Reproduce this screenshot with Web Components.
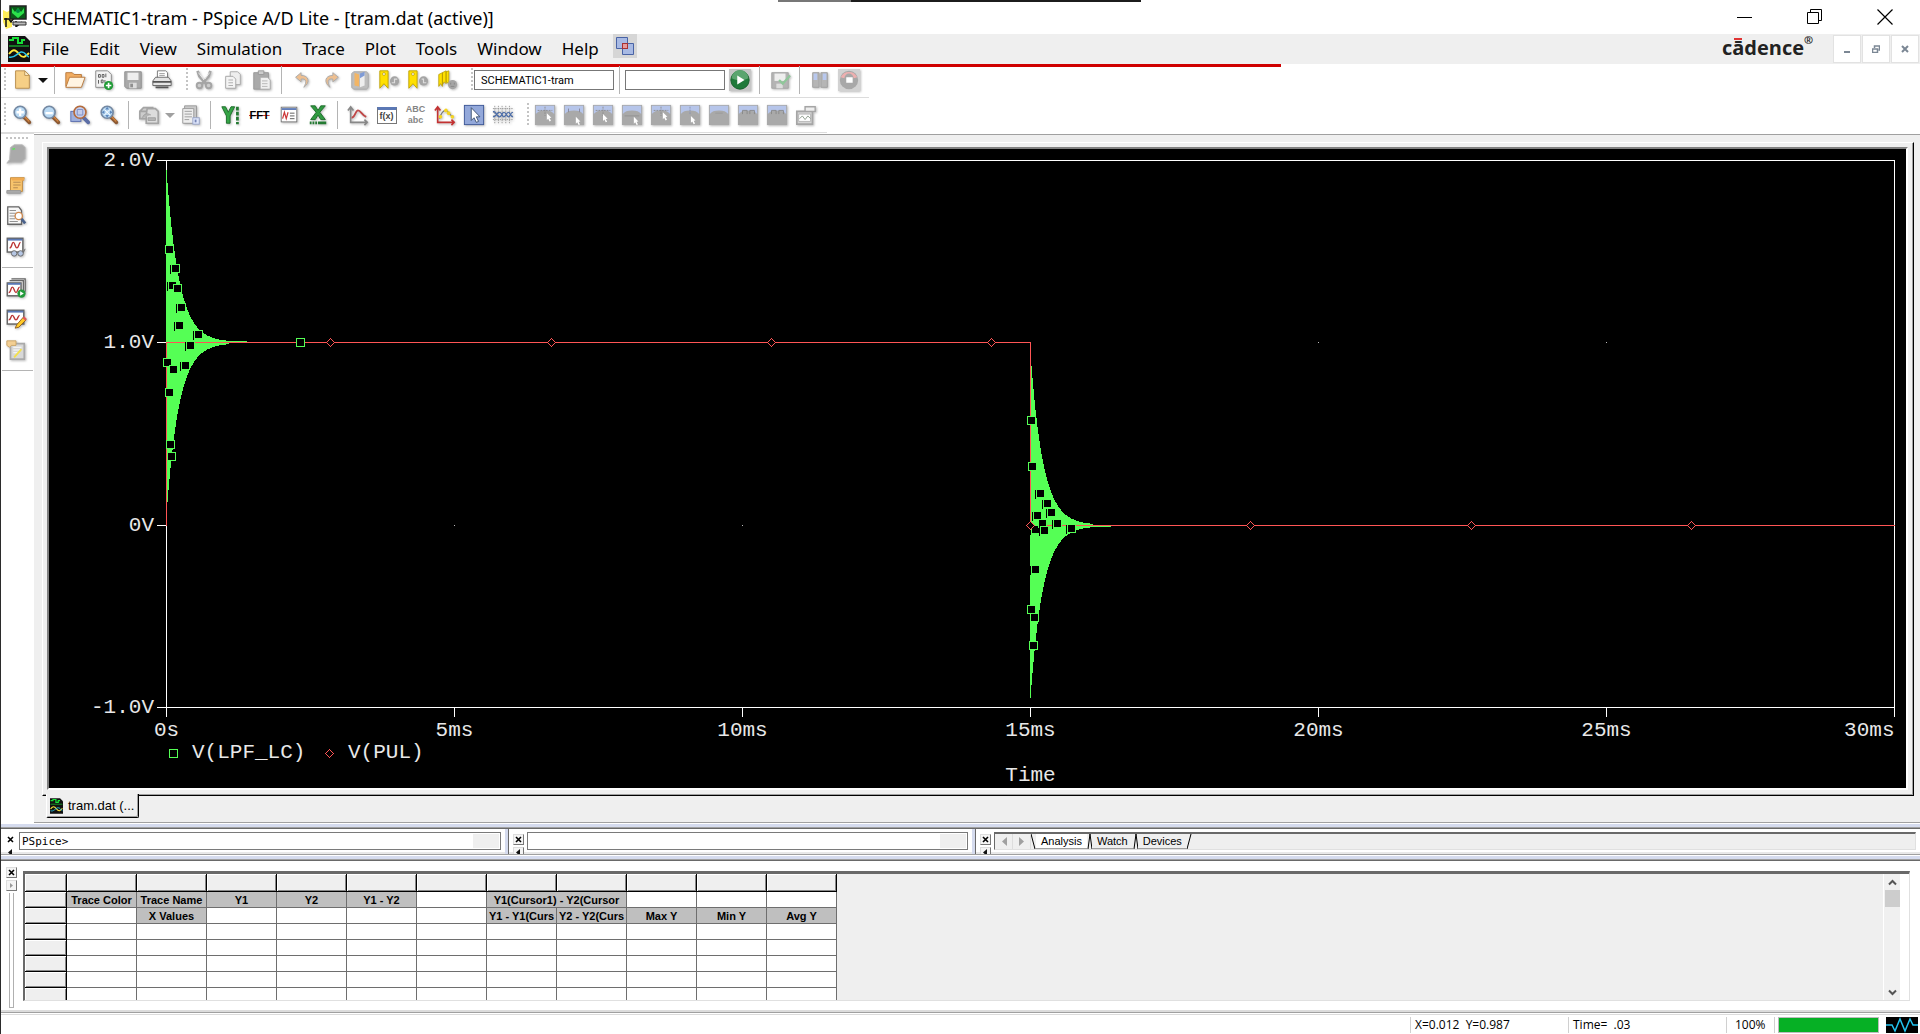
<!DOCTYPE html>
<html lang="en">
<head>
<meta charset="utf-8">
<title>SCHEMATIC1-tram - PSpice A/D Lite</title>
<style>
html, body { height: 100%; margin: 0; }
body { font-family: "Noto Sans", "Liberation Sans", sans-serif; background: #fff; color: #000; overflow: hidden; }
</style>
</head>
<body>
<pspice-app></pspice-app>
<script>
const BASE = `<style>
:host { box-sizing: border-box; }
*, *::before, *::after { box-sizing: border-box; }
button { font: inherit; color: inherit; background: none; border: 0; padding: 0; margin: 0; }
input { font: inherit; border-radius: 0; outline: 0; margin: 0; }
svg { display: block; }
</style>`;
class Part extends HTMLElement {
  connectedCallback() {
    if (this.shadowRoot) return;
    this.attachShadow({ mode: 'open' }).innerHTML = BASE + this.render();
    this.ready();
  }
  render() { return ''; }
  ready() {}
}

/* ---------- icons ---------- */
const win = '<rect x="3.5" y="3.5" width="17" height="16" fill="#fff" stroke="#777"/><path d="M4 5.5h16" stroke="#5b78b5" stroke-width="2"/>';
const lens = (inner) => `<path d="M14 14l6 6" stroke="#8d5a34" stroke-width="4" stroke-linecap="round"/><path d="M15 14l5 5" stroke="#d2843e" stroke-width="1.5"/><circle cx="10" cy="9" r="6.5" fill="#b9d9f3" stroke="#7489a3" stroke-width="1.8"/>${inner}`;
const marker = (t) => `<path d="M2 2h9v19l-4.500-5L2 21z" fill="#ffe000" stroke="#c2a400"/><circle cx="6.5" cy="5.5" r="1.5" fill="#fff" stroke="#a88c00" stroke-width=".7"/><circle cx="18" cy="13" r="5" fill="#a5a5a5"/><path d="${t}" fill="none" stroke="#ddd" stroke-width="1.3"/>`;
const cur = (extra) => `<rect x="1" y="1" width="22" height="22" fill="#a9a9a9"/><path d="M2 2h20v9c-2-3-5-4-10-4s-8 1-10 4z" fill="#b6c5ea"/>${extra}`;
const ptr = (x, y) => `<path d="M${x} ${y}l5 5-2 .3 1.5 3-1.5.7-1.5-3-1.5 1.500z" fill="#fff"/>`;
const cross = '<path d="M4 7h16M12 3v10" stroke="#8d8d8d" stroke-dasharray="2 1"/>';
const ICONS = {
  fresh: '<path d="M5 2h10l5 5v14H5z" fill="#f6cf86" stroke="#b98d4c"/><path d="M15 2v5h5z" fill="#fff1cf" stroke="#b98d4c"/>',
  open: '<path d="M2 19V4h7l2 2h8v4" fill="#f1ad62" stroke="#b9783a"/><path d="M2 20l4-11h17l-4 11z" fill="#fff4e2" stroke="#b9783a"/>',
  addfile: '<path d="M3 2h13l4 4v14H3z" fill="#f2f2f2" stroke="#888"/><path d="M6 6h2v3H6zM10 6h2v3h-2zM14 5v4M6 12v4M9 12h2v3H9zM13 12v3" fill="none" stroke="#555"/><circle cx="17" cy="18" r="5" fill="#1f9a35"/><path d="M17 15v6M14 18h6" stroke="#fff" stroke-width="1.8"/>',
  save: '<path d="M3 3h18v18H5l-2-2z" fill="#a9a9a9" stroke="#8f8f8f"/><rect x="6" y="4" width="12" height="8" fill="#eee"/><rect x="8" y="15" width="8" height="6" fill="#ddd"/><rect x="9" y="16" width="3" height="4" fill="#8f8f8f"/>',
  print: '<path d="M7 10V2h9l2 2v6" fill="#fff" stroke="#777"/><path d="M9 5h6M9 7h6" stroke="#999"/><path d="M2 13l3-4h14l3 4v5H2z" fill="#e4e4e4" stroke="#666"/><path d="M2 14h20M5 20h14" stroke="#555" stroke-width="2"/>',
  cut: '<path d="M5 2l2 6 8 9M19 2l-2 6-8 9" stroke="#a5a5a5" stroke-width="3" fill="none"/><path d="M6 4l6 8M18 4l-5 7" stroke="#eee"/><circle cx="7" cy="18" r="3" fill="#ccc" stroke="#a5a5a5" stroke-width="2"/><circle cx="17" cy="18" r="3" fill="#ccc" stroke="#a5a5a5" stroke-width="2"/>',
  copy: '<path d="M9 3h8l3 3v11H9z" fill="#eee" stroke="#aaa"/><path d="M4 8h8l3 3v10H4z" fill="#f4f4f4" stroke="#a5a5a5"/><path d="M7 12h5M7 15h5M7 18h5" stroke="#aaa"/>',
  paste: '<path d="M3 4h16v18H3z" fill="#aaa" stroke="#999"/><path d="M8 2h6v4H8z" fill="#ccc" stroke="#999"/><path d="M10 9h8l3 3v10H10z" fill="#f0f0f0" stroke="#aaa"/><path d="M12 13h6M12 16h6M12 19h6" stroke="#b5b5b5"/>',
  undo: '<path d="M11 4L5 9l6 5v-3c5-1 7 2 3 9 7-5 6-13-3-13z" fill="#eebf90" stroke="#aaa"/>',
  redo: '<path d="M14 4l6 5-6 5v-3c-5-1-7 2-3 9-7-5-6-13 3-13z" fill="#eebf90" stroke="#aaa"/>',
  book: '<path d="M3 5l2-2h14l2 2v15l-2 2H5l-2-2z" fill="#bdbdbd" stroke="#aaa"/><path d="M6 4l5 2v13l-5-1z" fill="#f2b565"/><path d="M12 6l5-2v14l-5 2z" fill="#eee"/><path d="M12 5l5-2v4l-5 3z" fill="#7f9bd6"/>',
  mark1: marker('M15 15h3v-4h3'), mark2: marker('M16 11h2v4h3'),
  mark3: '<path d="M3 6l4-2v15l-2-3-2 3zM7 4l4-2v14l-2-2-2 3zM11 3l3-1v14l-3-2z" fill="#ffe000" stroke="#b59a00" stroke-width=".8"/><circle cx="18" cy="17" r="5" fill="#a5a5a5"/><path d="M16 15v2M20 15v2M16 19h4" stroke="#888"/>',
  play: '<rect width="24" height="24" fill="#c6c6c6"/><circle cx="12" cy="12" r="10" fill="#1f7a3a" stroke="#175f2c"/><path d="M3 10a9 9 0 0118 0c-6 3-12 3-18 0z" fill="#5ba56f"/><path d="M9 7l8 5-8 5z" fill="#fff"/>',
  check: '<path d="M3 4h18v17H3z" fill="#b4b4b4" stroke="#a5a5a5"/><rect x="6" y="5" width="12" height="8" fill="#eee"/><rect x="8" y="16" width="7" height="5" fill="#ddd"/><path d="M11 12l4 4 8-9" stroke="#8fc79a" stroke-width="2.5" fill="none"/>',
  pause: '<path d="M4 4h7v16H4zM13 4h7v16h-7z" fill="#b5b5b5" stroke="#a0a0a0"/><path d="M5 5h4v7H5zM15 5h4v7h-4z" fill="#b8c8ee"/>',
  stop: '<rect width="24" height="24" fill="#d2d2d2"/><circle cx="12" cy="12" r="10" fill="#a8a8a8"/><path d="M3 9a10 10 0 0118 0l-4 1a5 5 0 00-10 0z" fill="#eeb0b0"/><rect x="9" y="9" width="7" height="6" fill="#fff"/>',
  zin: lens('<path d="M10 5v8M6 9h8" stroke="#fff" stroke-width="2.5"/>'),
  zout: lens('<path d="M6 10h8" stroke="#fff" stroke-width="2.5"/>'),
  zarea: '<rect x="2" y="8" width="11" height="11" fill="#9fb0de" stroke="#5a6eb0"/><path d="M15 14l6 6" stroke="#5c6ea6" stroke-width="4" stroke-linecap="round"/><circle cx="12" cy="9" r="6.5" fill="#c4cdeb" stroke="#b56a3a" stroke-width="1.8"/><path d="M9 6h6v6H9z" fill="none" stroke="#7c8cc6"/>',
  zfit: lens('<path d="M10 3l2 3H8zM10 15l2-3H8zM4 9l3-2v4zM16 9l-3-2v4z" fill="#5c86bb"/><path d="M7 6l6 6M13 6l-6 6" stroke="#fff"/>'),
  sims: '<path d="M2 8l4-4h10v4M2 8h9v8H2z" fill="#ccc" stroke="#a5a5a5" stroke-width="1.8"/><path d="M10 5h9l3 3v13H9V12z" fill="#dcdcdc" stroke="#a5a5a5" stroke-width="1.8"/><path d="M5 15c1-5 6-5 9-3M11 15h8v3h-8z" stroke="#a0a0a0" fill="#b5b5b5"/>',
  props: '<path d="M5 2h13v19H5z" fill="#c9c9c9" stroke="#999"/><path d="M3 5h12v16H3z" fill="#eee" stroke="#999"/><path d="M5 8h8M5 11h8M5 14h8M5 17h5" stroke="#999"/><rect x="14" y="15" width="7" height="7" fill="#dfe6fb" stroke="#96a3c6"/><path d="M17 17v3" stroke="#7685b5" stroke-width="2"/>',
  ylog: '<path d="M2 3h4l3 6 3-6h4l-5 10v8H7v-8z" fill="#35a546" stroke="#1c6b2a"/><path d="M19 3v19" stroke="#237a32" stroke-width="3" stroke-dasharray="4 1.5"/>',
  nwin: win + '<path d="M5 16l2-7 2 7 2-7" stroke="#c33" fill="none" stroke-width="1.3"/><path d="M13 10h5M13 13h5M13 16h5" stroke="#555"/>',
  xlog: '<path d="M4 2h5l3 5 3-5h5l-6 7 6 8h-5l-3-5-3 5H4l6-8z" fill="#2f9a40" stroke="#1c6b2a"/><path d="M3 20.5h18" stroke="#237a32" stroke-width="3" stroke-dasharray="2 1 2 1 2 1 9 0"/>',
  chart: '<path d="M4 3v17h18M1 7l3-4 3 4M19 17l3 3-3 3" fill="none" stroke="#888" stroke-width="1.8"/><path d="M5 15c4 0 4-8 7-8s4 5 9 7" fill="none" stroke="#c04848" stroke-width="2"/>',
  chart2: '<path d="M4 3v17h18M1 7l3-4 3 4M19 17l3 3-3 3" fill="none" stroke="#c33232" stroke-width="1.8"/><path d="M6 16c2-7 4-9 7-9s4 7 8 6" fill="none" stroke="#777" stroke-width="1.3"/><circle cx="7" cy="14" r="2" fill="#f5d522"/><circle cx="13" cy="7" r="2" fill="#f5d522"/><circle cx="16" cy="10" r="2" fill="#f5d522"/><circle cx="20" cy="14" r="2" fill="#f5d522"/>',
  arrow: '<rect x="1.5" y="1.5" width="21" height="21" fill="#93a8da" stroke="#3c5796"/><path d="M9 4v14l3-3 2.500 5 2.500-1-2.500-5h4z" fill="#fff" stroke="#3c5070"/>',
  mesh: '<path d="M3 2v20M7 2v20M11 2v20M15 2v20M19 2v20M1 5h22M1 9h22M1 13h22M1 17h22" stroke="#999" stroke-dasharray="1.5 1"/><path d="M1 8c4 0 4 6 7 6s3-5 5-5 3 5 5 5 2-5 5-5M1 14c4 0 4-5 7-5s3 5 5 5 3-5 5-5 2 5 5 5" fill="none" stroke="#4a6caa" stroke-width="1.3"/>',
  c1: cur(cross + ptr(14, 10)), c2: cur('<path d="M6 9V5M18 9V5" stroke="#889"/>' + ptr(14, 14)), c3: cur(cross + ptr(12, 11)),
  c4: cur('<path d="M4 13h16" stroke="#919191"/>' + ptr(14, 14)), c5: cur(cross + ptr(14, 9)), c6: cur('<path d="M12 3v8" stroke="#8992b0" stroke-dasharray="2 1"/>' + ptr(13, 13)),
  c7: cur('<path d="M8 10h8" stroke="#999"/>'), c8: cur('<path d="M6 11V7h5v4M14 11V7h5v4" fill="none" stroke="#888"/>'),
  report: '<path d="M2 8h17v14H2z" fill="#d4d4d4" stroke="#a5a5a5" stroke-width="1.8"/><path d="M4 11h13v8H4z" fill="#fff" stroke="#b5b5b5"/><path d="M11 3h11v5H11z" fill="#eee" stroke="#a5a5a5" stroke-width="1.5"/><path d="M5 16l3-3 3 4 3-4 3 3" fill="none" stroke="#8a9a8a"/>',
  blob: '<path d="M6 5l4-3h9l3 3v12l-4 4H8l-6 1 3-4z" fill="#aaa" stroke="#bbb"/><path d="M8 7l3-1" stroke="#6d6" stroke-width="2"/>',
  scroll: '<path d="M6 4h15l-1 3H19v12H6z" fill="#f8c46c" stroke="#c08a40"/><path d="M6 4h15v3H8z" fill="#f0aa50"/><path d="M9 9h8M9 12h8M9 15h5" stroke="#b08550"/><path d="M2 18h15v3H2z" fill="#aaa" stroke="#999"/>',
  find: '<path d="M3 2h12l3 4v15H3z" fill="#f8f8f8" stroke="#666" stroke-width="1.4"/><path d="M5 6h7M5 9h8M5 12h6M5 15h6M5 18h9" stroke="#888"/><circle cx="15" cy="12" r="4" fill="#fff" stroke="#cf8a50" stroke-width="1.5"/><path d="M18 15l4 5" stroke="#4a628c" stroke-width="3"/>',
  glasses: '<rect x="2.5" y="2.5" width="17" height="15" fill="#fff" stroke="#666" stroke-width="1.6"/><path d="M3 4h16" stroke="#5b78b5" stroke-width="2"/><path d="M5 13c3 0 2-6 4-6s2 6 4 6 2-6 4-6" fill="none" stroke="#b33" stroke-width="1.5"/><circle cx="10" cy="19" r="3" fill="#b5c6e3" stroke="#666"/><circle cx="17" cy="19" r="3" fill="#b5c6e3" stroke="#666"/><path d="M20 18l2-4" stroke="#666"/>',
  runs: '<path d="M7 2h15v14M5 4h15v13" fill="#eee" stroke="#666" stroke-width="1.4"/><rect x="2.5" y="6.5" width="15" height="14" fill="#fff" stroke="#666" stroke-width="1.6"/><path d="M3 7.5h14" stroke="#5b78b5" stroke-width="2"/><path d="M4 17c3 0 2-6 4-6s2 6 4 6 2-6 4-6" fill="none" stroke="#b33" stroke-width="1.5"/><circle cx="18" cy="18" r="4.5" fill="#239a3b"/><path d="M16.5 15.5l4 2.500-4 2.500z" fill="#fff"/>',
  edit: '<rect x="2.5" y="2.5" width="18" height="15" fill="#fff" stroke="#666" stroke-width="1.6"/><path d="M3 4h17" stroke="#5b78b5" stroke-width="2"/><path d="M4 13c3 0 2-5 4-5s2 5 4 5 2-5 4-5" fill="none" stroke="#b33" stroke-width="1.5"/><path d="M11 22l2-4 7-8 3 3-8 8z" fill="#ffca28" stroke="#8a5a20"/><path d="M20 10l3 3" stroke="#e05a5a" stroke-width="2.5"/>',
  note: '<path d="M6 5h15v17H6z" fill="#d8d8d8" stroke="#aaa" stroke-width="1.8"/><path d="M9 9h9M9 12h9M9 15h6" stroke="#fff"/><path d="M2 2h10v5H7L5 9l-3-2z" fill="#f3cf94" stroke="#c9a468"/><path d="M10 20l8-9" stroke="#f3e04b" stroke-width="2"/>',
};
customElements.define('tool-button', class extends Part {
  render() {
    const n = this.getAttribute('name');
    const word = { fft: '<b class="fft">FFT</b>', abc: '<span class="abc"><span>ABC</span><span>abc</span></span>', fx: '<span class="fx">f(x)</span>' }[n];
    return `<style>
      :host { display: flex; flex: none; width: 29px; height: 31px; align-items: center; justify-content: center; }
      button { width: 24px; height: 24px; display: grid; place-items: center; }
      svg { width: 22px; height: 22px; filter: drop-shadow(1px 1px 1px #bbb); }
      .fft { font: bold 11px/24px "Liberation Sans", sans-serif; background: linear-gradient(#c33, #c33) center / 100% 1px no-repeat; }
      .abc { display: grid; font: bold 9px/11px "Liberation Sans", sans-serif; color: #858585; text-align: center; }
      .fx { font: bold 9px/13px "Liberation Sans", sans-serif; border: 1px solid #777; border-top: 3px solid #5b78b5; color: #444; background: #fff; width: 20px; text-align: center; }
    </style><button aria-label="${n}">${word || `<svg viewBox="0 0 24 24">${ICONS[n]}</svg>`}</button>`;
  }
});

/* ---------- title ---------- */
const APP_ICON = '<svg width="24" height="24" viewBox="0 0 24 24"><path d="M0 5l4 2 5-3v18l-6 2-3-7z" fill="#ffee58"/><path d="M1 14h5l2 3 3-4h5M3 13v9M10 17l4 4 5-4M13 16v6" fill="none" stroke="#111" stroke-width="1.5"/><rect x="7" y="1" width="16" height="13" fill="#0a5a18" stroke="#222" stroke-width="1.5"/><path d="M9 3l3 4 3-4 3 4 3-4v5l-6 5-6-5z" fill="#2ce04a"/><circle cx="15" cy="6" r="2" fill="#084"/><path d="M10 17h13v3H10z" fill="#bbb" stroke="#333"/></svg>';
const DAT_ICON = (w, h) => `<svg width="${w}" height="${h}" viewBox="0 0 22 26"><path d="M0 0h17l5 5v21H0z" fill="#111"/><path d="M1 4h4V2h5v5h4V4h3" fill="none" stroke="#18e038" stroke-width="2"/><path d="M1 10h20" stroke="#18e038"/><path d="M1 18c4-5 6-5 10 0s6 3 10-1" fill="none" stroke="#ffe83b" stroke-width="1.8"/><path d="M1 21c5 2 8-4 12-5s5 4 8 5" fill="none" stroke="#28c4e8" stroke-width="1.5"/></svg>`;
customElements.define('title-bar', class extends Part {
  render() {
    return `<style>
      :host { display: flex; height: 34px; align-items: center; padding-left: 2px; gap: 5px; position: relative; background: #fff; }
      h1 { margin: 0; font-size: 18px; font-weight: 400; line-height: 34px; flex: 1; padding-top: 2px; }
      .edge { position: absolute; top: 0; left: 40.5%; width: 18.9%; height: 2px; background: linear-gradient(90deg, #777 20%, #1c1c1c 20%); }
      button { width: 70px; height: 34px; display: grid; place-items: center; }
      .win { display: flex; }
    </style>
    <div class="edge"></div>${APP_ICON}
    <h1>SCHEMATIC1-tram - PSpice A/D Lite - [tram.dat (active)]</h1>
    <div class="win">
    <button aria-label="Minimize"><svg width="16" height="16"><path d="M0 8.5h15" stroke="#000"/></svg></button>
    <button aria-label="Restore"><svg width="16" height="16" fill="none" stroke="#000"><path d="M.5 3.5h11v11H.5zM3.5 3.5v-3h11v11h-3"/></svg></button>
    <button aria-label="Close"><svg width="16" height="16"><path d="M.5 .5l15 15M15.5 .5l-15 15" stroke="#000" stroke-width="1.2"/></svg></button>
    </div>`;
  }
});

customElements.define('menu-bar', class extends Part {
  render() {
    return `<style>
      :host { display: flex; height: 30px; background: #efefef; padding-left: 7px; }
      nav { display: flex; margin-left: 2px; }
      nav button { font-size: 17px; line-height: 28px; padding: 0 10px; }
      .doc { padding-top: 2px; }
      .over { width: 24px; height: 24px; margin-left: 4px; background: #d6d6d6; display: grid; place-items: center; }
      .gap { flex: 1; }
      .brand { position: relative; font: bold 20px/28px "Open Sans", sans-serif; color: #222; margin-right: 29px; }
      .brand i { position: absolute; left: 12px; top: 4px; width: 8px; height: 2px; background: #e03434; }
      sup { position: absolute; left: 100%; top: 0; font: bold 11px/11px "Open Sans", sans-serif; }
      .mdi { width: 28px; height: 28px; margin: 1px 1px 0 0; border: 1px solid #e2e2e2; background: #fff; display: grid; place-items: center; }
    </style>
    <div class="doc">${DAT_ICON(22, 26)}</div>
    <nav>${['File', 'Edit', 'View', 'Simulation', 'Trace', 'Plot', 'Tools', 'Window', 'Help'].map(t => `<button>${t}</button>`).join('')}</nav>
    <button class="over" aria-label="Overlap"><svg width="20" height="20" viewBox="0 0 20 20"><path d="M1.5 1.5h11v11h-11zM7.5 7.5h11v11h-11z" fill="#a8bae4" stroke="#4963a5"/><rect x="7.5" y="7.5" width="5" height="5" fill="#e79b9b" stroke="#a83232"/></svg></button>
    <span class="gap"></span>
    <span class="brand">cādence<i></i><sup>®</sup></span>
    <button class="mdi" aria-label="Minimize document"><svg width="8" height="8"><path d="M1 7h6" stroke="#7b8794" stroke-width="2"/></svg></button>
    <button class="mdi" aria-label="Restore document"><svg width="8" height="8" fill="none" stroke="#7b8794"><path d="M.5 4h5v3.5h-5zM2.5 3V1h5v4h-1" stroke-width="1.5"/></svg></button>
    <button class="mdi" aria-label="Close document"><svg width="8" height="8"><path d="M1 1l6 6M7 1L1 7" stroke="#7b8794" stroke-width="2"/></svg></button>`;
  }
});

/* ---------- toolbars ---------- */
const tools = (list) => list.split(' ').map(n =>
  n === '|' ? '<span class="sep"></span>' : n === ':' ? '<span class="grip"></span>' :
  n === 'v' ? '<button class="drop" aria-label="More"></button>' : `<tool-button name="${n}"></tool-button>`).join('');
customElements.define('tool-bars', class extends Part {
  render() {
    return `<style>
      :host { display: block; background: #fff; }
      .red { width: 66.7%; height: 3px; background: #cf0000; }
      .row { display: flex; align-items: center; }
      .row .grip:first-child { margin-left: 3px; }
      .one { height: 31px; width: 868px; padding-bottom: 4px; border-bottom: 1px solid #dcdcdc; }
      .two { height: 35px; width: 826px; border-bottom: 1px solid #dcdcdc; }
      .grip { width: 2px; height: 24px; margin: 0 1px 0 10px; background: repeating-linear-gradient(#c4c4c4 0 2px, #fff 2px 4px); }
      .sep { width: 1px; height: 28px; margin: 0 5px; background: #b4b4b4; }
      .drop { width: 13px; height: 20px; display: grid; place-items: center; }
      .drop::after { content: ""; border: 5px solid transparent; border-top: 5px solid #111; border-bottom: 0; }
      .two .drop::after { border-top-color: #a0a0a0; }
      input { height: 20px; border: 1px solid #777; font: 11px Roboto, sans-serif; padding: 0 6px; background: #fff; }
      .name { width: 140px; } .cmd { width: 100px; }
    </style>
    <div class="red"></div>
    <div class="row one">${tools(': fresh v | open addfile save print : cut copy paste | undo redo book mark1 mark2 mark3 :')}
      <input class="name" aria-label="Profile" value="SCHEMATIC1-tram"><span class="sep"></span><input class="cmd" aria-label="Run to">
      ${tools('play | check | pause stop')}</div>
    <div class="row two">${tools(': zin zout zarea zfit | sims v props | ylog fft nwin xlog | chart fx abc chart2 arrow mesh : c1 c2 c3 c4 c5 c6 c7 c8 c8 report')}</div>`;
  }
});
customElements.define('side-bar', class extends Part {
  render() {
    return `<style>
      :host { display: block; width: 33px; flex: none; background: #fff; border-top: 1px solid #dcdcdc; padding-top: 3px; }
      .grip { display: block; height: 2px; margin: 0 5px; background: repeating-linear-gradient(90deg, #c4c4c4 0 2px, #fff 2px 4px); }
      .sep { display: block; height: 1px; margin: 5px 1px; background: #b4b4b4; }
      tool-button { height: 30px; margin: 0 0 1px; }
    </style>${tools(': blob scroll find glasses | runs edit note |')}`;
  }
});

/* ---------- waveform ---------- */
const T1 = [[46,1.511],[162,1.409,1],[98,1.317,1],[197,1.299],[266,1.195,1],[226,1.097,1],[561,1.047,1],[417,.984,1],[23,.894],[336,.878,1],[122,.856],[58,.725],[75,.44],[93,.374],[2332,1]];
const T2 = [[87,-.026,1],[23,.575],[41,.323],[179,.175,1],[301,.12,1],[370,.071,1],[127,.053,1],[475,.011,1],[214,.011],[249,-.027,1],[718,-.016,1],[93,-.241,1],[23,-.465],[75,-.504],[58,-.662]];
customElements.define('wave-plot', class extends Part {
  render() {
    return `<style>
      :host { display: block; background: #000; flex: 1; min-height: 0; overflow: hidden; }
      svg { width: 100%; height: 100%; shape-rendering: crispEdges; }
      text { font: 21px "Liberation Mono", monospace; fill: #e8e8e8; }
      .ax { fill: none; stroke: #fff; } .g { fill: #5f5; } .r { fill: none; stroke: #f55; }
      .sq { fill: #000; stroke: #5f5; } .di { fill: none; stroke: #f55; }
    </style><svg role="img" aria-label="V(LPF_LC) and V(PUL) against time"></svg>`;
  }
  ready() { this.draw(); new ResizeObserver(() => this.draw()).observe(this); }
  draw() {
    const W = this.clientWidth, H = this.clientHeight;
    if (!W || !H) return;
    const L = 117, R = W - 12, T = 11, B = H - 81;
    const X = ms => Math.round(L + ms * (R - L) / 30) + .5;
    const Y = v => Math.round(B - (v + 1) * (B - T) / 3) + .5;
    const unit = (B - T) / 3, pxms = (R - L) / 30;
    let s = `<path class="ax" d="M${L - 9} ${Y(2)}H${X(30)}V${Y(-1)}H${L - 9}M${X(0)} ${Y(2)}V${Y(-1) + 9}M${L - 9} ${Y(1)}h9M${L - 9} ${Y(0)}h9`;
    for (let t = 5; t <= 30; t += 5) s += `M${X(t)} ${Y(-1)}v9`;
    s += '"/>';
    for (const [t, v] of [[5, 0], [10, 0], [20, 1], [25, 1]]) s += `<rect x="${X(t) - .5}" y="${Y(v) - .5}" width="1" height="1" fill="#bbb"/>`;
    const ring = (t0, v0, up, dn) => {
      let d = '';
      for (let k = 0; k < 81; k++) {
        const a = Math.round(unit * .945 * Math.exp(-k / pxms / .217));
        const x = X(t0) - .5 + k, y = Y(v0) - .5;
        const hi = k < up[0] || k > up[1] ? 0 : Math.max(a, 1), lo = k < dn[0] || k > dn[1] ? 0 : Math.max(a, 1);
        d += `M${x} ${y - hi}h1v${hi + lo + 1}h-1z`;
      }
      return `<path class="g" d="${d}"/>`;
    };
    s += ring(0, 1, [0, 80], [1, 62]) + ring(15, 0, [1, 62], [0, 80]);
    s += `<path class="r" d="M${X(0)} ${Y(0)}V${Y(1)}H${X(15)}V${Y(0)}H${X(30)}"/>`;
    const sq = (t0, list) => { for (const [us, v, e] of list) {
      const x = X(t0 + us / 1000), y = Y(v);
      if (e) s += `<path d="M${x - 5} ${y - 4}v9" stroke="#000"/>`;
      s += `<rect class="sq" x="${x - 4}" y="${y - 4}" width="8" height="8"/>`;
    } };
    sq(0, T1); sq(15, T2);
    const di = (x, y) => `<path class="di" d="M${x - 4} ${y}l4-4 4 4-4 4z"/>`;
    const mask = (x, y) => `<path d="M${x - 4} ${y}l4-4 4 4-4 4z" fill="#000"/>`;
    for (const [t, v] of [[2.85, 1], [6.68, 1], [10.5, 1], [14.32, 1], [15, 0], [18.82, 0], [22.66, 0], [26.48, 0]]) s += mask(X(t), Y(v)) + di(X(t), Y(v));
    for (const [v, l] of [[2, '2.0V'], [1, '1.0V'], [0, '0V'], [-1, '-1.0V']]) s += `<text x="${L - 12}" y="${Y(v) + 5}" text-anchor="end">${l}</text>`;
    for (let t = 0; t <= 30; t += 5) s += `<text x="${X(t)}" y="${Y(-1) + 28}" text-anchor="${t === 30 ? 'end' : 'middle'}">${t ? t + 'ms' : '0s'}</text>`;
    const ly = B + 47;
    s += `<rect class="sq" x="${L + 3.5}" y="${ly - 4.5}" width="8" height="8"/><text x="${L + 26}" y="${ly + 4}">V(LPF_LC)</text>`;
    s += di(L + 163.5, ly - .5) + `<text x="${L + 182}" y="${ly + 4}">V(PUL)</text><text x="${X(15)}" y="${B + 74}" text-anchor="middle">Time</text>`;
    this.shadowRoot.querySelector('svg').innerHTML = s;
  }
});
customElements.define('plot-window', class extends Part {
  render() {
    return `<style>
      :host { display: flex; flex-direction: column; flex: 1; min-width: 0; background: #efefef; border-top: 1px solid #a0a0a0; border-bottom: 1px solid #a0a0a0; padding: 7px 6px 0 8px; margin-top: 1px; }
      .outer { flex: 1; min-height: 0; display: flex; border: 1px solid #000; border-top-color: #fff; border-left-color: #fff; }
      .mid { flex: 1; display: flex; min-width: 0; border: solid #a0a0a0; border-width: 0 1px 1px 0; padding: 4px; }
      .inner { flex: 1; display: flex; min-width: 0; border: 2px solid #fff; border-top-color: #808080; border-left-color: #808080; }
      .tabs { height: 26px; display: flex; padding-left: 4px; }
      .tabs button { position: relative; display: flex; align-items: center; gap: 5px; height: 24px; margin-top: -2px; padding: 0 4px 0 3px; background: #efefef; border: 1px solid #000; border-top: 0; border-left-color: #fff; border-radius: 0 0 2px 2px; font: 13px "Liberation Sans", sans-serif; box-shadow: inset -1px -1px #a0a0a0; }
    </style>
    <div class="outer"><div class="mid"><div class="inner"><slot></slot></div></div></div>
    <div class="tabs"><button>${DAT_ICON(13, 16)}tram.dat (...</button></div>`;
  }
});

/* ---------- docks ---------- */
customElements.define('split-bar', class extends Part {
  render() {
    return `<style>:host { display: block; flex: none; height: 6px; border-top: 1px solid #fff; border-bottom: 1px solid #696969; background: linear-gradient(#d5dbee 3px, #a0a0a0 3px); }</style>`;
  }
});
customElements.define('dock-close', class extends Part {
  render() {
    return `<style>
      :host { display: flex; flex-direction: column; gap: 2px; flex: none; }
      button { width: 11px; height: 11px; display: grid; place-items: center; }
      :host([raised]) button { border: 1px solid #777; border-top-color: #ddd; border-left-color: #ddd; background: #f4f4f4; }
    </style>
    <button aria-label="Close"><svg width="7" height="7"><path d="M1 1l5 5M6 1L1 6" stroke="#000" stroke-width="1.6"/></svg></button>
    <button aria-label="Expand"><svg width="7" height="7"><path d="${this.hasAttribute('right') ? 'M2 1l3 2.5-3 2.5z' : 'M5 0v7L1 3.5z'}" fill="${this.hasAttribute('right') ? '#999' : '#111'}"/></svg></button>`;
  }
});
customElements.define('command-dock', class extends Part {
  render() {
    return `<style>
      :host { display: flex; flex: none; height: 26px; background: #fff; border-bottom: 1px solid #a0a0a0; overflow: hidden; }
      .pane { display: flex; align-items: flex-start; padding: 3px 4px 0; gap: 3px; border-bottom: 2px solid #e8e8e8; }
      .pane dock-close { margin-top: 2px; }
      .a { flex: 0 0 504px; } .b { flex: 0 0 463px; } .c { flex: 1; min-width: 0; }
      .bar { width: 4px; flex: none; background: linear-gradient(90deg, #d5dbee 3px, #696969 3px); }
      .field { flex: 1; display: flex; height: 18px; border: 1px solid #7a7a7a; padding: 1px; }
      input { flex: 1; min-width: 0; border: 0; padding: 0 1px; font: 11px "DejaVu Sans Mono", monospace; }
      .field span { width: 26px; background: #efefef; }
      .sheet { flex: 1; display: flex; height: 18px; background: #efefef; border: 1px solid #e0e0e0; border-top: 2px solid #696969; border-left: 1px solid #696969; font: 11px/15px "Liberation Sans", sans-serif; }
      .nav { width: 18px; display: grid; place-items: center; border-right: 1px solid #ddd; }
      .tab { height: 15px; padding: 0 5px; border-bottom: 1px solid #a0a0a0; }
      .tab.on { background: #fff; }
      svg.sl { flex: none; width: 5px; height: 15px; }
    </style>
    <div class="pane a"><dock-close></dock-close><div class="field"><input aria-label="Command" value="PSpice&gt;"><span></span></div></div>
    <div class="bar"></div>
    <div class="pane b"><dock-close raised></dock-close><div class="field"><input aria-label="Output"><span></span></div></div>
    <div class="bar"></div>
    <div class="pane c"><dock-close raised></dock-close><div class="sheet">
      <button class="nav" aria-label="Previous"><svg width="6" height="9"><path d="M6 0v9L1 4.5z" fill="#a0a0a0"/></svg></button>
      <button class="nav" aria-label="Next"><svg width="6" height="9"><path d="M0 0v9l5-4.5z" fill="#a0a0a0"/></svg></button>
      <svg class="sl"><path d="M0 0l4 15" stroke="#000"/></svg><button class="tab on">Analysis</button>
      <svg class="sl"><path d="M1 15L3 0l2 15" fill="none" stroke="#000"/></svg><button class="tab">Watch</button>
      <svg class="sl"><path d="M1 15L3 0l2 15" fill="none" stroke="#000"/></svg><button class="tab">Devices</button>
      <svg class="sl"><path d="M0 15L4 0" stroke="#000"/></svg>
    </div></div>`;
  }
});
customElements.define('cursor-grid', class extends Part {
  render() {
    const c = (t, n = 1) => `<td class="h"${n > 1 ? ` colspan="${n}"` : ''}>${t}</td>`, e = n => '<td></td>'.repeat(n);
    return `<style>
      :host { display: flex; flex: none; height: 149px; background: #fff; padding: 10px 10px 9px 4px; gap: 6px; }
      .edge { width: 12px; display: flex; flex-direction: column; align-items: center; gap: 2px; margin: -4px 0 -7px; }
      .edge i { flex: 1; width: 5px; border: 1px solid #b0b0b0; border-top: 0; }
      .box { flex: 1; display: flex; height: 130px; overflow: hidden; background: #efefef; border: 1px solid #e0e0e0; border-top: 3px solid #696969; border-left: 2px solid #696969; }
      .area { flex: 1; overflow: hidden; }
      table { border-collapse: separate; border-spacing: 0; table-layout: fixed; width: 812px; background: #fff; font: bold 11px/14px "Liberation Sans", sans-serif; }
      td, th { height: 16px; padding: 0; overflow: hidden; white-space: nowrap; text-align: center; border: solid #6e6e6e; border-width: 0 1px 1px 0; }
      th { background: #efefef; border: solid #000; border-width: 0 1px 1px 0; box-shadow: inset 1px 1px #fff, inset -1px -1px #888; }
      thead th { height: 18px; }
      .h { background: #bfbfbf; }
      .scroll { width: 17px; display: flex; flex-direction: column; align-items: center; background: #f0f0f0; border-left: 1px solid #fff; }
      .scroll button { height: 16px; width: 16px; display: grid; place-items: center; }
      .thumb { width: 15px; height: 17px; background: #cdcdcd; margin-bottom: auto; }
      .rest { width: 9px; background: #fff; }
    </style>
    <div class="edge"><dock-close raised right></dock-close><i></i></div>
    <div class="box"><div class="area"><table>
      <colgroup><col style="width:42px">${'<col>'.repeat(11)}</colgroup>
      <thead><tr>${'<th></th>'.repeat(12)}</tr></thead>
      <tbody>
      <tr><th></th>${c('Trace Color')}${c('Trace Name')}${c('Y1')}${c('Y2')}${c('Y1 - Y2')}${e(1)}${c('Y1(Cursor1) - Y2(Cursor', 2)}${e(3)}</tr>
      <tr><th></th>${e(1)}${c('X Values')}${e(4)}${c('Y1 - Y1(Curs')}${c('Y2 - Y2(Curs')}${c('Max Y')}${c('Min Y')}${c('Avg Y')}</tr>
      ${`<tr><th></th>${e(11)}</tr>`.repeat(5)}
      </tbody></table></div>
      <div class="scroll"><button aria-label="Up"><svg width="9" height="7"><path d="M1 5.5l3.5-3.5L8 5.5" fill="none" stroke="#555" stroke-width="2"/></svg></button><div class="thumb"></div><button aria-label="Down"><svg width="9" height="7"><path d="M1 1.5L4.5 5 8 1.5" fill="none" stroke="#555" stroke-width="2"/></svg></button></div>
      <div class="rest"></div>
    </div>`;
  }
});
customElements.define('status-bar', class extends Part {
  render() {
    return `<style>
      :host { display: flex; flex: none; height: 24px; border-top: 2px solid #dcdcdc; background: #fff; font: 12px/16px "Open Sans", sans-serif; }
      .in { flex: 1; display: flex; justify-content: flex-end; border-top: 1px solid #a0a0a0; box-shadow: inset 0 1px #fff, inset 0 2px #dcdcdc; padding: 4px 2px 1px 0; }
      .in > span { flex: none; border-left: 1px solid #d0d0d0; padding-left: 4px; white-space: pre; }
      .in .xy, .in .t { width: 158px; } .in .p { width: 48px; padding-left: 8px; }
      .in .g { width: 112px; padding: 0 7px 0 3px; } .g b { display: block; height: 16px; background: #06b025; border: 1px solid #bcbcbc; }
      svg { flex: none; height: 16px; background: #000; }
    </style><div class="in"><span class="xy">X=0.012  Y=0.987</span><span class="t">Time=  .03</span><span class="p">100%</span><span class="g"><b></b></span>
    <svg width="32" height="16"><path d="M0 8h6l3 6 5-12 5 12 5-12 3 6h5" fill="none" stroke="#22c4f0" stroke-width="1.5"/></svg></div>`;
  }
});
customElements.define('pspice-app', class extends Part {
  render() {
    return `<style>
      :host { display: flex; flex-direction: column; height: 100vh; border-left: 1px solid #2b2b2b; background: #fff; }
      main { flex: 1; display: flex; min-height: 0; }
    </style>
    <title-bar></title-bar><menu-bar></menu-bar><tool-bars></tool-bars>
    <main><side-bar></side-bar><plot-window><wave-plot></wave-plot></plot-window></main>
    <split-bar></split-bar><command-dock></command-dock><split-bar></split-bar><cursor-grid></cursor-grid><status-bar></status-bar>`;
  }
});
</script>
</body>
</html>
